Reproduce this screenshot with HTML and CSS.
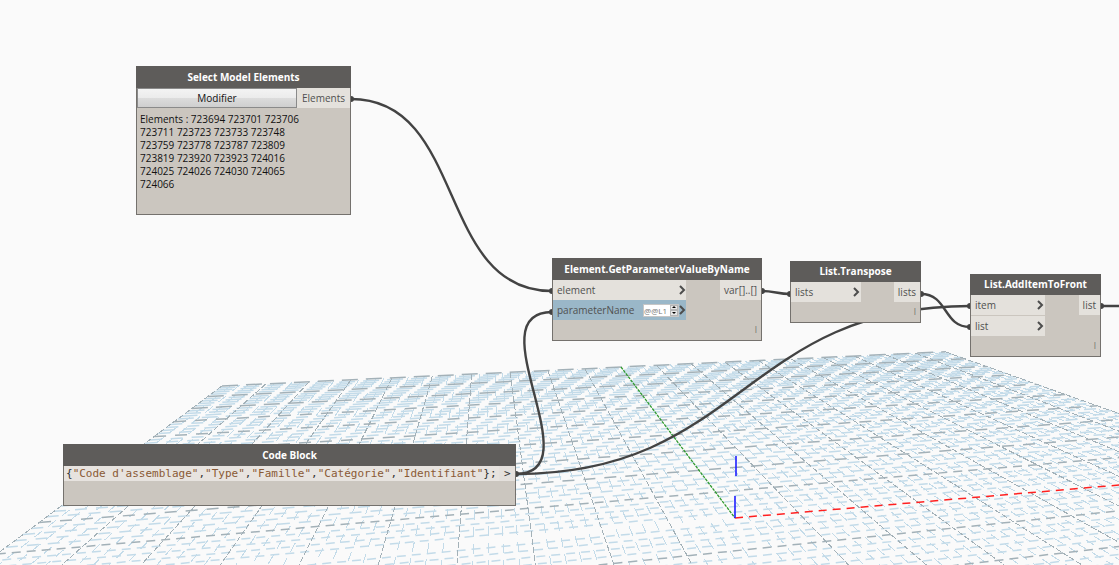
FILE: index.html
```html
<!DOCTYPE html>
<html lang="fr">
<head>
<meta charset="utf-8">
<title>Dynamo</title>
<link rel="stylesheet" href="styles.css">
</head>
<body>
<main class="workspace">
  <svg class="layer" aria-hidden="true">
    <g id="grid" class="grid"></g>
    <path class="axis axis-y" d="M621 367L735 518"/>
    <path class="axis axis-x" d="M735 518L1119 485L2200 392"/>
    <path class="axis axis-z" d="M735 518V496M736 476V456"/>
  </svg>
  <svg class="layer" aria-hidden="true">
    <g class="wires">
      <path d="M351 99C467 99 436 291 552 291"/>
      <path d="M516 474C594 474 474 312 552 312"/>
      <path d="M516 474C742 474 744 306 970 306"/>
      <path d="M762 291C774 291 778 294 790 294"/>
      <path d="M921 294C948 294 943 327 970 327"/>
      <path d="M1101 306H2200"/>
    </g>
    <g class="dots">
      <circle cx="351" cy="99" r="3"/><circle cx="552" cy="291" r="3"/>
      <circle cx="552" cy="312" r="3"/><circle cx="516" cy="474" r="3"/>
      <circle cx="762" cy="291" r="3"/><circle cx="790" cy="294" r="3"/>
      <circle cx="921" cy="294" r="3"/><circle cx="970" cy="306" r="3"/>
      <circle cx="970" cy="327" r="3"/><circle cx="1101" cy="306" r="3"/>
    </g>
  </svg>

  <section class="node node-select">
    <h2 class="title">Select Model Elements</h2>
    <div class="ports">
      <button class="modify" type="button">Modifier</button>
      <span class="port">Elements</span>
    </div>
    <p class="selection">Elements : 723694 723701 723706 723711 723723 723733 723748 723759 723778 723787 723809 723819 723920 723923 724016 724025 724026 724030 724065 724066</p>
  </section>

  <section class="node node-param">
    <h2 class="title">Element.GetParameterValueByName</h2>
    <div class="ports">
      <div class="inputs">
        <div class="port"><span>element</span><svg class="chevron" viewBox="0 0 6 8"><path d="M1 0L5 4L1 8"/></svg></div>
        <div class="port port-active">
          <label for="level">parameterName</label>
          <span class="level">
            <input id="level" type="text" value="@@L1">
            <span class="spin">
              <button type="button" aria-label="Plus"><svg viewBox="0 0 4 2"><path d="M2 0L4 2H0Z"/></svg></button>
              <button type="button" aria-label="Moins"><svg viewBox="0 0 4 2"><path d="M0 0H4L2 2Z"/></svg></button>
            </span>
          </span>
          <svg class="chevron" viewBox="0 0 6 8"><path d="M1 0L5 4L1 8"/></svg>
        </div>
      </div>
      <div class="port">var[]..[]</div>
    </div>
    <div class="lacing">l</div>
  </section>

  <section class="node node-transpose">
    <h2 class="title">List.Transpose</h2>
    <div class="ports">
      <div class="inputs">
        <div class="port"><span>lists</span><svg class="chevron" viewBox="0 0 6 8"><path d="M1 0L5 4L1 8"/></svg></div>
      </div>
      <div class="port">lists</div>
    </div>
    <div class="lacing">l</div>
  </section>

  <section class="node node-front">
    <h2 class="title">List.AddItemToFront</h2>
    <div class="ports">
      <div class="inputs">
        <div class="port"><span>item</span><svg class="chevron" viewBox="0 0 6 8"><path d="M1 0L5 4L1 8"/></svg></div>
        <div class="port"><span>list</span><svg class="chevron" viewBox="0 0 6 8"><path d="M1 0L5 4L1 8"/></svg></div>
      </div>
      <div class="port">list</div>
    </div>
    <div class="lacing">l</div>
  </section>

  <section class="node node-code">
    <h2 class="title">Code Block</h2>
    <div class="editor">
      <code>{<b>"Code d'assemblage"</b>,<b>"Type"</b>,<b>"Famille"</b>,<b>"Catégorie"</b>,<b>"Identifiant"</b>};</code>
      <span class="out">&gt;</span>
    </div>
  </section>
</main>
<script src="grid.js"></script>
</body>
</html>
```

FILE: styles.css
```css
* { box-sizing: border-box; }

body {
  margin: 0;
  background: #fafafa;
  font-family: "Open Sans", "Noto Sans", sans-serif;
  font-size: 10px;
  color: #111;
}

.workspace {
  position: relative;
  min-height: 100vh;
  overflow: hidden;
}

.layer {
  position: absolute;
  inset: 0;
  width: 100%;
  height: 100%;
}

.grid path { fill: none; stroke-width: 1.5; }
.grid .minor { stroke: #c3dbe9; }
.grid .major { stroke: #a3b1b8; }
.grid .far { stroke-dasharray: 16 8; }
.grid .mid { stroke-dasharray: 12 9; }
.grid .near { stroke-dasharray: 9 6; }
.grid .depth { stroke-width: 1; shape-rendering: crispEdges; }
.grid .minor.depth { stroke-dasharray: 10 7; }
.grid .major.depth { stroke-dasharray: 6 2; }

.axis { fill: none; }
.axis-x { stroke: #ff2020; stroke-width: 1.5; stroke-dasharray: 8 6; }
.axis-y { stroke: #2f9a2f; stroke-width: 1.3; stroke-dasharray: 3 1; }
.axis-z { stroke: #2020ff; stroke-width: 1.6; }

.wires path { fill: none; stroke: #434343; stroke-width: 2.4; }
.dots { fill: #434343; }

.node {
  position: absolute;
  display: flex;
  flex-direction: column;
  background: #cbc6bf;
  border: 1px solid #74716d;
}

.node-select { left: 136px; top: 66px; width: 215px; }
.node-param { left: 552px; top: 258px; width: 210px; }
.node-transpose { left: 790px; top: 261px; width: 131px; }
.node-front { left: 970px; top: 274px; width: 131px; }
.node-code { left: 63px; top: 444px; width: 453px; }

.title {
  margin: -1px -1px 0;
  background: #5e5c5a;
  color: #fff;
  font-size: 10px;
  font-weight: 700;
  line-height: 22px;
  text-align: center;
  white-space: nowrap;
}

.node-transpose .title, .node-front .title { line-height: 21px; }

.ports {
  display: flex;
  justify-content: space-between;
  align-items: flex-start;
}

.inputs { display: flex; flex-direction: column; gap: 1px; }
.node-param .inputs { width: 133px; gap: 0; }
.node-transpose .inputs { width: 70px; }
.node-front .inputs { width: 74px; }

.port {
  display: flex;
  align-items: center;
  justify-content: space-between;
  height: 20px;
  padding: 0 4px;
  background: #e4e1dc;
  color: #505050;
  font-size: 10px;
  line-height: 20px;
  white-space: nowrap;
}

.node-select .port { padding: 0 5px; }
.inputs .port { padding-right: 1px; }
.port-active { background: #9ab7c8; }
.node-transpose .inputs .port, .node-front .inputs .port { padding-right: 2px; }

.chevron { width: 6px; height: 8px; overflow: visible; }
.chevron path { fill: none; stroke: #4d4d4d; stroke-width: 2; }

.modify {
  flex: 1;
  height: 20px;
  padding: 0;
  border: 1px solid #8a8a8a;
  background: linear-gradient(#f3f3f3, #ebebeb 50%, #dcdcdc 50%, #cfcfcf);
  color: #111;
  font: 10px/18px "Open Sans", "Noto Sans", sans-serif;
}

.selection {
  width: 172px;
  height: 106px;
  margin: 0;
  padding: 5px 0 0 3px;
  line-height: 13px;
}

.level {
  display: flex;
  width: 36px;
  height: 13px;
  margin-left: auto;
  border: 1px solid #c6c6c6;
  background: #fff;
}

.level input {
  flex: 1;
  min-width: 0;
  padding: 0;
  border: 0;
  background: none;
  color: #777;
  font: 8px/11px "Open Sans", "Noto Sans", sans-serif;
}

.spin { display: flex; flex-direction: column; width: 8px; }
.spin button {
  display: flex;
  align-items: center;
  justify-content: center;
  flex: 1;
  min-height: 0;
  padding: 0;
  border: 1px solid #b5b5b5;
  background: #e8e8e8;
}
.spin svg { width: 4px; height: 2px; }

.lacing {
  height: 20px;
  padding-right: 4px;
  color: #7a7570;
  font-size: 9px;
  line-height: 20px;
  text-align: right;
}

.editor {
  display: flex;
  justify-content: space-between;
  height: 15px;
  margin-bottom: 24px;
  padding-left: 2px;
  background: #e7e3df;
  color: #333;
  font: 11px/16px "DejaVu Sans Mono", monospace;
  white-space: nowrap;
}

.editor code { font: inherit; }
.editor b { font-weight: 400; color: #8a5a35; }
.out { width: 16px; padding-left: 5px; background: #e4e0dc; }
```

FILE: grid.js
```javascript
// Ground plane in perspective: 10 major cells each side of the origin,
// 5 minor cells per major one.
(function () {
  var NS = 'http://www.w3.org/2000/svg';
  var grid = document.getElementById('grid');

  function project(u, v) {
    var w = 1 + 0.0846 * v + 0.01914 * u;
    return [
      (735 + 41.13 * v + 77.9 * u) / w,
      (518 + 15.95 * v + 3.9 * u) / w
    ];
  }

  function line(a, b, cls) {
    var path = document.createElementNS(NS, 'path');
    path.setAttribute('d', 'M' + a[0].toFixed(1) + ' ' + a[1].toFixed(1) +
      'L' + b[0].toFixed(1) + ' ' + b[1].toFixed(1));
    path.setAttribute('class', cls);
    grid.appendChild(path);
  }

  function draw(major) {
    var kind = major ? 'major' : 'minor';
    var i, v;
    for (i = -50; i <= 50; i++) {
      if ((i % 5 === 0) === major && i !== 0) {
        line(project(i / 5, 10), project(i / 5, -4), kind + ' depth');
      }
    }
    for (i = -20; i <= 50; i++) {
      v = i / 5;
      if ((i % 5 === 0) === major && i !== 0) {
        line(project(-10, v), project(10, v),
          kind + (v > 7 ? ' far' : v > 1 ? ' mid' : ' near'));
      }
    }
  }

  draw(false);
  draw(true);
})();
```
